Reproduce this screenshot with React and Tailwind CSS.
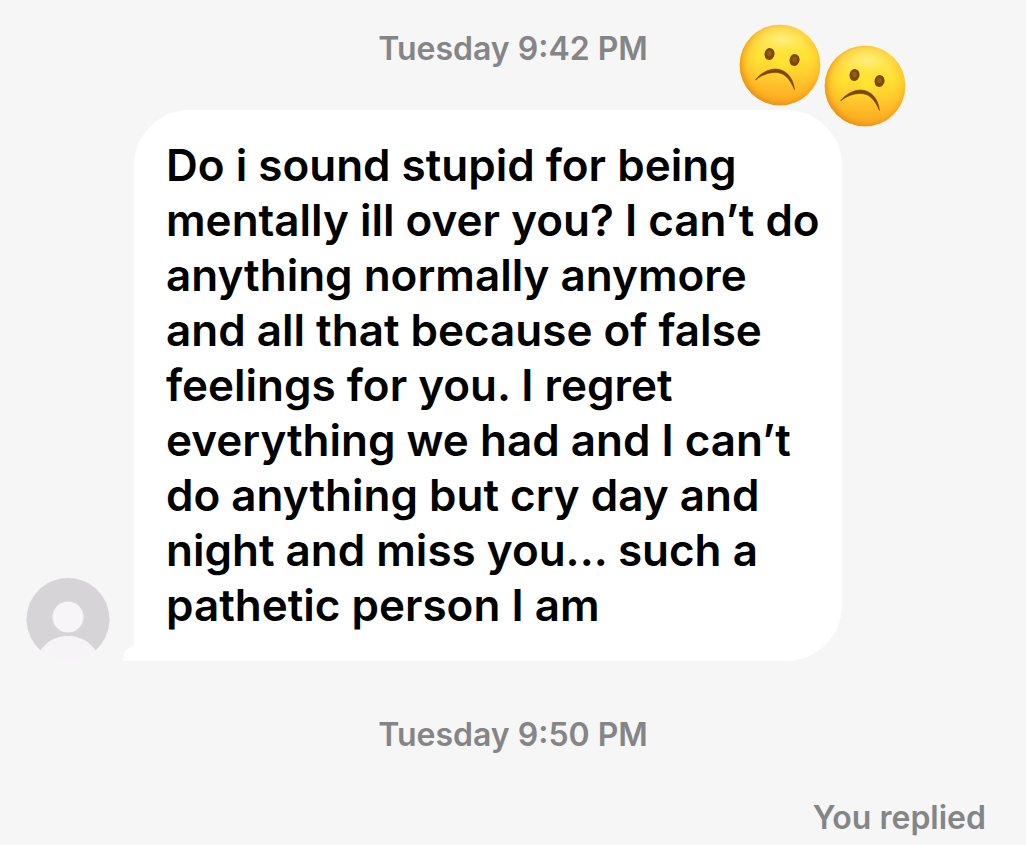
import React from 'react';

const messageLines = [
  'Do i sound stupid for being',
  'mentally ill over you? I can’t do',
  'anything normally anymore',
  'and all that because of false',
  'feelings for you. I regret',
  'everything we had and I can’t',
  'do anything but cry day and',
  'night and miss you... such a',
  'pathetic person I am',
];

const Avatar = () => (
  <svg className="h-[84px] w-[84px] shrink-0" viewBox="0 0 84 84" role="img" aria-label="Profile">
    <path d="M14.5 73.5 A41.5 41.5 0 1 1 69.5 73.5 A33.3 33.3 0 0 0 14.5 73.5 Z" fill="#d7d4d8" />
    <path d="M14.5 73.5 A33.3 33.3 0 0 1 69.5 73.5 A41.5 41.5 0 0 1 14.5 73.5 Z" fill="#f7f4f7" />
    <circle cx="42" cy="40" r="15.5" fill="#f7f5f8" />
  </svg>
);

const FrownFace = ({ id, className }) => (
  <svg className={className} viewBox="0 0 82 82" role="img" aria-label="Frowning face">
    <defs>
      <linearGradient id={`${id}-base`} x1="0" y1="0" x2="0" y2="1">
        <stop offset="0" stopColor="#ffe262" />
        <stop offset="0.4" stopColor="#ffe433" />
        <stop offset="0.65" stopColor="#ffcb2e" />
        <stop offset="1" stopColor="#fda31f" />
      </linearGradient>
      <radialGradient id={`${id}-edge`} cx="0.53" cy="0.47" r="0.54">
        <stop offset="0" stopColor="#ffef35" stopOpacity="0.5" />
        <stop offset="0.55" stopColor="#ffc62b" stopOpacity="0" />
        <stop offset="0.82" stopColor="#fbae20" stopOpacity="0.4" />
        <stop offset="1" stopColor="#ec8d12" stopOpacity="0.95" />
      </radialGradient>
      <radialGradient id={`${id}-shine`} cx="0.5" cy="0.4" r="0.5">
        <stop offset="0" stopColor="#fff3a0" stopOpacity="0.7" />
        <stop offset="1" stopColor="#fff03a" stopOpacity="0" />
      </radialGradient>
    </defs>
    <circle cx="41" cy="41" r="40.3" fill={`url(#${id}-base)`} />
    <circle cx="41" cy="41" r="40.3" fill={`url(#${id}-edge)`} />
    <ellipse cx="43" cy="19" rx="32" ry="17" fill={`url(#${id}-shine)`} />
    <ellipse cx="30.5" cy="30" rx="5" ry="6" fill="#7a4805" transform="rotate(12 30.5 30)" />
    <ellipse cx="55.5" cy="36" rx="5" ry="6" fill="#7a4805" transform="rotate(12 55.5 36)" />
    <ellipse cx="30.5" cy="29.5" rx="2.4" ry="3" fill="#965c0c" />
    <ellipse cx="55.5" cy="35.5" rx="2.4" ry="3" fill="#965c0c" />
    <path
      d="M16.5 56 C22 49 29 45 37 45 C47 45.5 54 53 55.5 65.5 C50.5 54 45 48.5 36.5 48.5 C29 48.5 22 51.5 16.5 56 Z"
      fill="#7a4703"
      stroke="#7a4703"
      strokeWidth="0.6"
      strokeLinejoin="round"
    />
  </svg>
);

const Timestamp = ({ children }) => (
  <p className="text-center text-[32px] leading-10 font-semibold text-[#858587]">{children}</p>
);

const App = () => {
  return (
    <main className="min-h-screen bg-[#f6f6f7] pt-[29px] font-['Inter','Liberation_Sans',sans-serif]">
      <Timestamp>Tuesday 9:42 PM</Timestamp>

      <div className="mt-[41px] flex items-end pl-[26px]">
        <Avatar />
        <div className="relative ml-6 max-w-[708px] grow rounded-[56px] rounded-bl-none bg-white py-7 pl-8">
          {/* Bubble tail */}
          <svg className="absolute bottom-0 -left-3 h-4 w-3" viewBox="0 0 12 16" aria-hidden="true">
            <path d="M12 0 C9 2 3 4 2 9 L1 16 L12 16 Z" fill="#ffffff" />
          </svg>
          <p className="text-[44px] leading-[55px] font-semibold whitespace-pre-line text-black">
            {messageLines.join('\n')}
          </p>
          {/* Reactions */}
          <div className="absolute -top-[86px] -right-16 flex">
            <FrownFace id="first" className="h-[82px] w-[82px]" />
            <FrownFace id="second" className="mt-[21px] ml-[3px] h-[82px] w-[82px]" />
          </div>
        </div>
      </div>

      <div className="mt-[54px]">
        <Timestamp>Tuesday 9:50 PM</Timestamp>
      </div>
      <p className="mt-[43px] pr-10 text-right text-[32px] leading-10 font-semibold text-[#858587]">
        You replied
      </p>
    </main>
  );
};

export default App;
